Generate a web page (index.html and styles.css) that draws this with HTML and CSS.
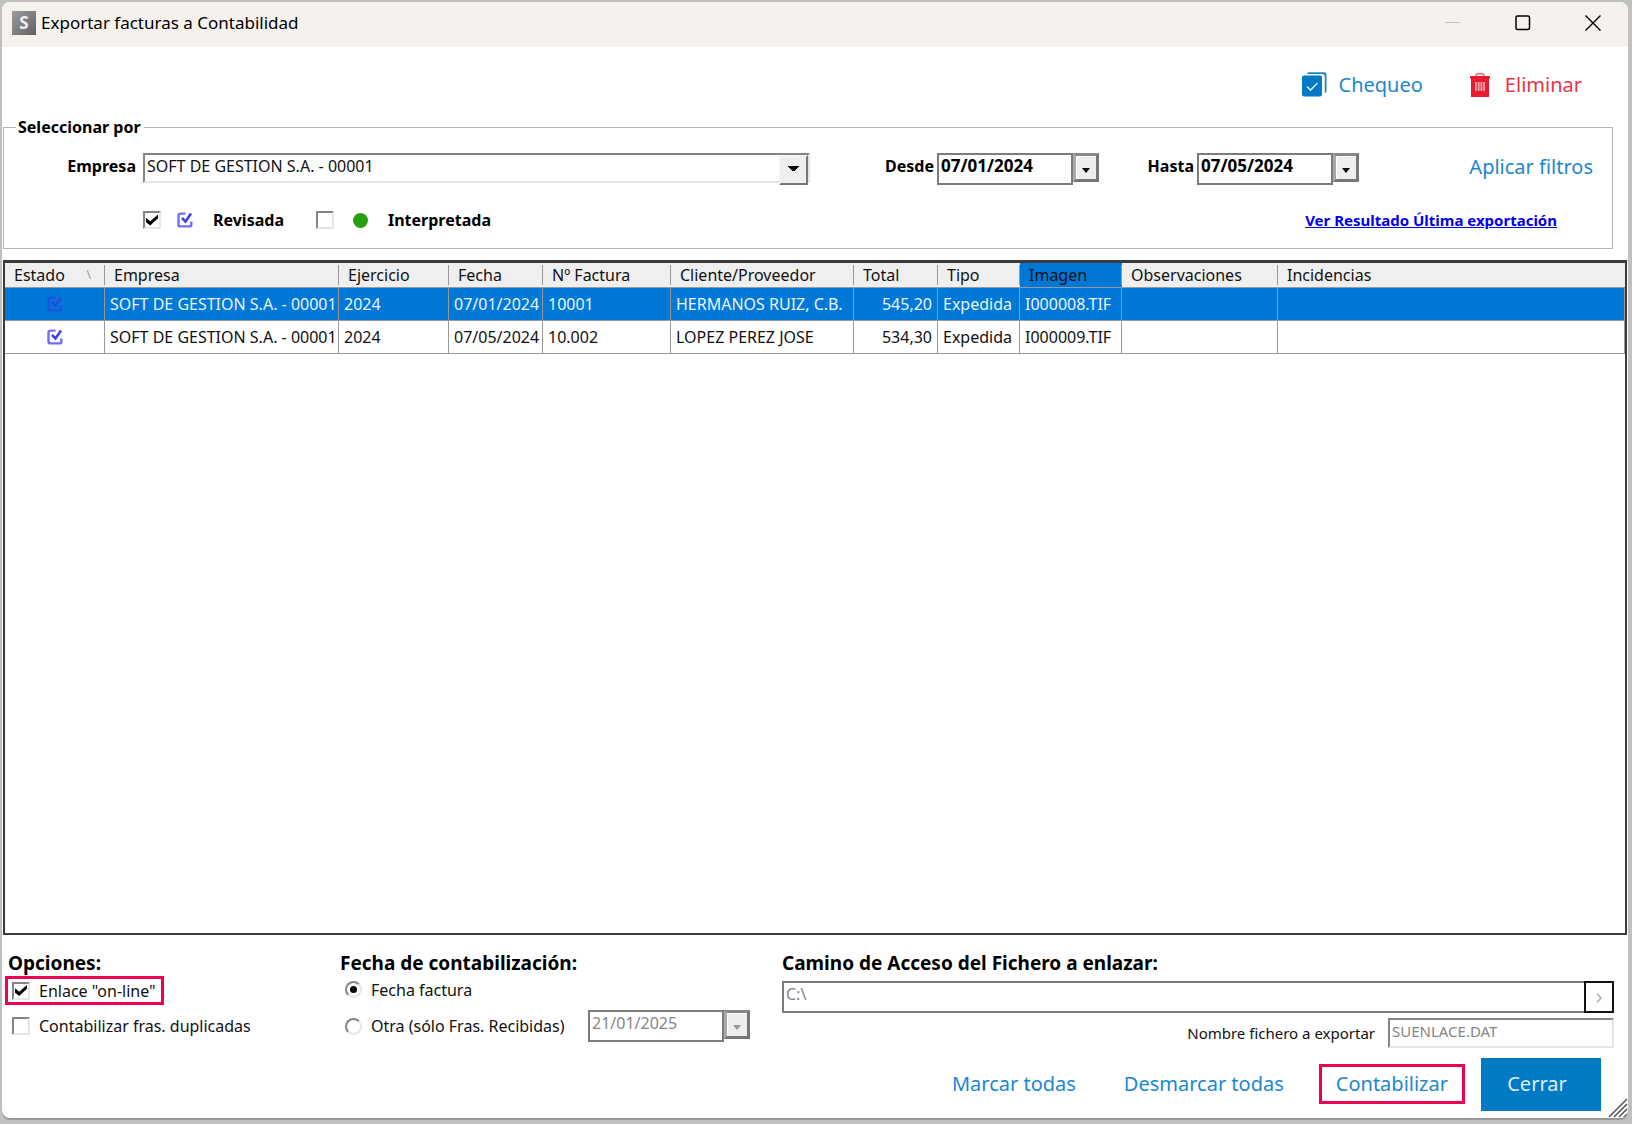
FILE: index.html
```html
<!DOCTYPE html>
<html lang="es">
<head>
<meta charset="utf-8">
<title>Exportar facturas a Contabilidad</title>
<link rel="stylesheet" href="styles.css">
</head>
<body>
<svg class="defs" aria-hidden="true">
  <symbol id="reviewed" viewBox="0 0 16 16">
    <path d="M8.500 1.600H3.500a2 2 0 0 0-2 2v8.800a2 2 0 0 0 2 2h8.800a2 2 0 0 0 2-2V9.500" fill="none" stroke="currentColor" stroke-width="2.400" opacity=".75"/>
    <path d="M5 6l3.500 3.500L14 1.500" fill="none" stroke="currentColor" stroke-width="2.600"/>
  </symbol>
</svg>
<div class="window">
  <header class="titlebar">
    <span class="app-icon" aria-hidden="true">S</span>
    <h1 class="title">Exportar facturas a Contabilidad</h1>
    <div class="window-controls">
      <button type="button" class="control" aria-label="Minimizar" disabled><svg width="16" height="16" viewBox="0 0 16 16"><path d="M0 7.500h15" stroke="#c4c0bc" stroke-width="1"/></svg></button>
      <button type="button" class="control" aria-label="Maximizar"><svg width="16" height="16" viewBox="0 0 16 16"><rect x="1" y="1" width="13.500" height="13.500" rx="1.500" fill="none" stroke="#000" stroke-width="1.500"/></svg></button>
      <button type="button" class="control" aria-label="Cerrar ventana"><svg width="16" height="16" viewBox="0 0 16 16"><path d="M.5.500l15 15M15.500.500l-15 15" stroke="#000" stroke-width="1.400"/></svg></button>
    </div>
  </header>

  <div class="toolbar">
    <button type="button" class="action">
      <svg width="25" height="25" viewBox="0 0 25 25"><path d="M5 2a2 2 0 0 1 2-1.700h15.500a2 2 0 0 1 2 2V19a2 2 0 0 1-1.800 2V4a2 2 0 0 0-2-2z" fill="#1c84c9"/><rect y="3.500" width="20" height="21" rx="2" fill="#007ac5"/><path d="M5 14.500l3.500 3.500 7-7" fill="none" stroke="#d5ebf8" stroke-width="1.600"/></svg>
      Chequeo
    </button>
    <button type="button" class="action danger">
      <svg width="20" height="24" viewBox="0 0 20 24"><path d="M6 4V2.500A1.800 1.800 0 0 1 7.800.800h4.400A1.800 1.800 0 0 1 14 2.500V4" fill="none" stroke="#ee6571" stroke-width="1.500"/><path d="M0 3h20v2.500h-1V24H1V5.500H0z" fill="#e81c30"/><path d="M6 9v9M8.700 9v9M11.400 9v9M14 9v9" stroke="#f6a0a8" stroke-width="1.800"/></svg>
      Eliminar
    </button>
  </div>

  <fieldset class="filters">
    <legend>Seleccionar por</legend>
    <div class="filter-row">
      <label class="name" for="empresa">Empresa</label>
      <div class="combo">
        <select id="empresa"><option>SOFT DE GESTION S.A. - 00001</option></select>
      </div>
      <label class="name" for="desde">Desde</label>
      <div class="date">
        <input id="desde" type="text" value="07/01/2024"><button type="button" class="drop" aria-label="Abrir calendario desde"></button>
      </div>
      <label class="name" for="hasta">Hasta</label>
      <div class="date">
        <input id="hasta" type="text" value="07/05/2024"><button type="button" class="drop" aria-label="Abrir calendario hasta"></button>
      </div>
      <button type="button" class="action apply">Aplicar filtros</button>
    </div>
    <div class="state-row">
      <label class="state"><input type="checkbox" class="check" checked><svg class="mark" width="16" height="16"><use href="#reviewed"/></svg>Revisada</label>
      <label class="state"><input type="checkbox" class="check"><span class="dot"></span>Interpretada</label>
      <a class="last-export" href="#resultado">Ver Resultado Última exportación</a>
    </div>
  </fieldset>

  <div class="grid-panel">
    <table class="invoices">
      <colgroup><col class="c-state"><col class="c-company"><col class="c-year"><col class="c-date"><col class="c-number"><col class="c-client"><col class="c-total"><col class="c-type"><col class="c-image"><col class="c-notes"><col></colgroup>
      <thead>
        <tr>
          <th><span class="sorted">Estado<i>\</i></span></th><th>Empresa</th><th>Ejercicio</th><th>Fecha</th><th>Nº Factura</th><th>Cliente/Proveedor</th><th>Total</th><th>Tipo</th><th class="current">Imagen</th><th>Observaciones</th><th>Incidencias</th>
        </tr>
      </thead>
      <tbody>
        <tr class="selected">
          <td class="icon"><svg class="mark" width="16" height="16" role="img" aria-label="Revisada"><use href="#reviewed"/></svg></td><td>SOFT DE GESTION S.A. - 00001</td><td>2024</td><td>07/01/2024</td><td>10001</td><td>HERMANOS RUIZ, C.B.</td><td class="amount">545,20</td><td>Expedida</td><td>I000008.TIF</td><td></td><td></td>
        </tr>
        <tr>
          <td class="icon"><svg class="mark" width="16" height="16" role="img" aria-label="Revisada"><use href="#reviewed"/></svg></td><td>SOFT DE GESTION S.A. - 00001</td><td>2024</td><td>07/05/2024</td><td>10.002</td><td>LOPEZ PEREZ JOSE</td><td class="amount">534,30</td><td>Expedida</td><td>I000009.TIF</td><td></td><td></td>
        </tr>
      </tbody>
    </table>
  </div>

  <div class="options">
    <section class="option-group">
      <h2>Opciones:</h2>
      <label class="choice marked"><input type="checkbox" class="check" checked>Enlace "on-line"</label>
      <label class="choice"><input type="checkbox" class="check">Contabilizar fras. duplicadas</label>
    </section>
    <section class="posting-date">
      <h2>Fecha de contabilización:</h2>
      <label class="choice"><input type="radio" class="radio" name="fecha" checked>Fecha factura</label>
      <div class="other-date">
        <label class="choice"><input type="radio" class="radio" name="fecha">Otra (sólo Fras. Recibidas)</label>
        <div class="date">
          <input type="text" value="21/01/2025" aria-label="Otra fecha" disabled><button type="button" class="drop" aria-label="Abrir calendario" disabled></button>
        </div>
      </div>
    </section>
    <section class="file">
      <h2><label for="ruta">Camino de Acceso del Fichero a enlazar:</label></h2>
      <div class="path">
        <input id="ruta" type="text" value="C:\" disabled><button type="button" aria-label="Examinar" disabled><svg width="6" height="10" viewBox="0 0 6 10"><path d="M1 .700L5 5 1 9.300" fill="none" stroke="#aaa" stroke-width="1.500"/></svg></button>
      </div>
      <div class="file-name">
        <label for="fichero">Nombre fichero a exportar</label>
        <input id="fichero" type="text" value="SUENLACE.DAT" disabled>
      </div>
    </section>
  </div>

  <footer class="actions">
    <button type="button" class="action">Marcar todas</button>
    <button type="button" class="action">Desmarcar todas</button>
    <button type="button" class="action outlined">Contabilizar</button>
    <button type="button" class="action primary">Cerrar</button>
  </footer>
  <svg class="grip" width="20" height="20" viewBox="0 0 20 20" aria-hidden="true"><path d="M1 19L19 1M6 19L19 6M11 19l8-8M16 19l3-3" stroke="#555" stroke-width="1.600"/></svg>
</div>
</body>
</html>
```
FILE: styles.css
```css
* {
  box-sizing: border-box;
}

body {
  margin: 0;
  background: #c0c0c0;
  color: #111;
  font: 16px/20px "Noto Sans", "Open Sans", sans-serif;
}

button,
input,
select {
  margin: 0;
  padding: 0;
  border: 0;
  border-radius: 0;
  background: none;
  color: inherit;
  font: inherit;
}

h1,
h2 {
  margin: 0;
}

.defs {
  position: absolute;
  width: 0;
  height: 0;
}

.window {
  position: relative;
  display: flex;
  flex-direction: column;
  min-height: calc(100vh - 8px);
  margin: 2px 4px 6px 2px;
  overflow: hidden;
  border-radius: 8px;
  background: #fff;
  box-shadow: 0 2px 0 #9a9a9a;
}

/* Title bar */
.titlebar {
  display: flex;
  align-items: center;
  height: 45px;
  padding: 0 27px 3px 10px;
  background: #f5f2ee;
}

.app-icon {
  width: 24px;
  height: 24px;
  background: linear-gradient(135deg, #9c9b9d, #626065);
  color: #eee;
  font-size: 17px;
  font-weight: 700;
  line-height: 23px;
  text-align: center;
}

.title {
  margin-left: 5px;
  color: #000;
  font-size: 17px;
  font-weight: 400;
}

.window-controls {
  display: flex;
  gap: 54px;
  margin-left: auto;
}

.control {
  display: flex;
  width: 16px;
  height: 16px;
}

/* Text buttons */
.action {
  display: flex;
  align-items: center;
  gap: 12px;
  color: #1b87cf;
  font-size: 20px;
  line-height: 24px;
}

.danger {
  gap: 15px;
  color: #ea3346;
}

.toolbar {
  display: flex;
  justify-content: flex-end;
  align-items: center;
  gap: 47px;
  height: 72px;
  padding: 3px 46px 0 0;
}

/* Filters */
.filters {
  min-width: 0;
  margin: 0 15px 0 1px;
  padding: 18px 0 16px;
  border: 1px solid #b4b4b4;
}

.filters legend {
  margin-left: 12px;
  padding: 0 3px 0 2px;
  color: #000;
  font-weight: 700;
  line-height: 16px;
}

.filter-row {
  display: grid;
  grid-template-columns: 132px minmax(200px, 1fr) 121px 162px 92px 162px 250px;
  column-gap: 3px;
  align-items: start;
}

.name {
  padding-top: 3px;
  color: #000;
  font-weight: 700;
  text-align: right;
}

.combo {
  position: relative;
  height: 30px;
  margin-left: 4px;
  border: 2px solid;
  border-color: #858585 #e6e6e6 #e6e6e6 #858585;
}

.combo select {
  width: 100%;
  height: 22px;
  padding-left: 2px;
  appearance: none;
}

.combo::after {
  content: "";
  position: absolute;
  top: 0;
  right: 0;
  width: 25px;
  height: 26px;
  border: 2px solid;
  border-color: #f4f4f4 #777 #777 #f4f4f4;
  background: linear-gradient(#000, #000) center 9px / 11px 1px no-repeat, linear-gradient(#000, #000) center 10px / 9px 1px no-repeat, linear-gradient(#000, #000) center 11px / 7px 1px no-repeat, linear-gradient(#000, #000) center 12px / 5px 1px no-repeat, linear-gradient(#000, #000) center 13px / 3px 1px no-repeat, #eee;
  pointer-events: none;
}

.date {
  display: flex;
  align-items: flex-start;
}

.date input {
  width: 136px;
  height: 32px;
  padding: 0 0 7px 2px;
  border: 2px solid #7c7c7c;
  color: #000;
  font-size: 17px;
  font-weight: 700;
}

.drop {
  display: grid;
  place-items: center;
  width: 26px;
  height: 29px;
  border: 3px solid;
  border-color: #888 #777 #777 #aaa;
  background: #eee;
  box-shadow: inset 1px 1px #fff;
}

.drop::before {
  content: "";
  margin-top: 5px;
  border: 4px solid transparent;
  border-top: 5px solid #000;
  border-bottom: 0;
}

.date input:disabled {
  color: #858585;
  font-size: 16px;
  font-weight: 400;
}

input:disabled {
  color: #858585;
}

.drop:disabled::before {
  border-top-color: #999;
}

.apply {
  justify-self: end;
  margin-right: 19px;
  padding-top: 2px;
}

.state-row {
  display: flex;
  align-items: center;
  height: 24px;
  margin-top: 23px;
  padding: 0 55px 0 139px;
}

.state {
  display: flex;
  align-items: center;
  margin-right: 32px;
  color: #000;
  font-weight: 700;
}

.state .mark,
.state .dot {
  margin: 0 20px 0 16px;
}

.mark {
  display: block;
  color: #3f3ff0;
}

.state .dot {
  width: 15px;
  height: 15px;
  margin-left: 19px;
  border-radius: 50%;
  background: #27a010;
}

.last-export {
  margin-left: auto;
  color: #00e;
  font-size: 15px;
  font-weight: 700;
}

.check {
  display: grid;
  place-items: center;
  width: 18px;
  height: 18px;
  border: 2px solid;
  border-color: #858585 #e6e6e6 #e6e6e6 #858585;
  appearance: none;
}

.check:checked::before {
  content: "";
  width: 12px;
  height: 11px;
  background: #000;
  clip-path: polygon(0 30%, 35% 62%, 100% 0, 100% 34%, 35% 100%, 0 70%);
}

/* Invoice grid */
.grid-panel {
  flex: 1;
  margin: 11px 1px 0;
  border: 2px solid #3a3a3a;
  border-width: 3px 2px 2px;
}

.invoices {
  width: 100%;
  border-spacing: 0;
  table-layout: fixed;
}

.c-state { width: 100px; }
.c-company { width: 234px; }
.c-year { width: 110px; }
.c-date { width: 94px; }
.c-number { width: 128px; }
.c-client { width: 183px; }
.c-total { width: 84px; }
.c-type { width: 82px; }
.c-image { width: 102px; }
.c-notes { width: 156px; }

.invoices th,
.invoices td {
  overflow: hidden;
  padding: 0 5px;
  border-right: 1px solid #999;
  border-bottom: 1px solid #999;
  text-align: left;
  white-space: nowrap;
}

.invoices th {
  height: 25px;
  padding: 0 9px;
  border-right: 0;
  background: linear-gradient(#999, #999) right center / 1px 20px no-repeat #efefef;
  font-weight: 400;
}

.invoices th:last-child {
  background: #efefef;
}

.invoices .current {
  background-color: #0078d7;
}

.sorted {
  display: flex;
  justify-content: space-between;
}

.sorted i {
  padding-right: 5px;
  color: #999;
  font-size: 12px;
  font-style: normal;
}

.invoices td {
  height: 33px;
}

.invoices .icon .mark {
  margin: 0 auto;
}

.invoices .amount {
  text-align: right;
}

.selected {
  background: #0078d7;
  color: #eaf4fc;
}

.selected .mark {
  color: #2b45e8;
}

/* Export options */
.options {
  display: grid;
  grid-template-columns: 335px 442px minmax(0, 1fr);
  padding: 16px 14px 0 3px;
}

.options h2 {
  height: 25px;
  color: #000;
  font-size: 19px;
  line-height: 24px;
}

.option-group h2 {
  padding-left: 3px;
}

.choice {
  display: flex;
  align-items: center;
  gap: 9px;
}

.option-group .choice {
  width: max-content;
  height: 29px;
  padding-left: 7px;
}

.option-group .choice + .choice {
  margin-top: 6px;
}

.option-group .marked {
  padding: 0 5px 0 4px;
  border: 3px solid #f0004f;
}

.posting-date > .choice {
  height: 27px;
}

.posting-date .choice {
  padding-left: 5px;
}

.radio {
  display: grid;
  place-items: center;
  width: 17px;
  height: 17px;
  border: 2px solid;
  border-color: #858585 #e6e6e6 #e6e6e6 #858585;
  border-radius: 50%;
  appearance: none;
}

.radio:checked::before {
  content: "";
  width: 7px;
  height: 7px;
  border-radius: 50%;
  background: #000;
}

.other-date {
  display: flex;
  align-items: center;
  justify-content: space-between;
  height: 32px;
  margin-top: 7px;
  padding-right: 32px;
}

.path {
  display: flex;
  height: 32px;
  margin-top: 5px;
}

.path input {
  flex: 1;
  min-width: 0;
  padding: 0 0 6px 2px;
  border: 2px solid #7c7c7c;
  border-right: 0;
}

.path button {
  width: 30px;
  border: 2px solid #111;
}

.file-name {
  display: flex;
  justify-content: flex-end;
  align-items: center;
  gap: 13px;
  margin-top: 5px;
  font-size: 15px;
}

.file-name input {
  width: 226px;
  height: 30px;
  padding: 0 0 4px 2px;
  border: 2px solid;
  border-color: #858585 #e6e6e6 #e6e6e6 #858585;
}

/* Bottom buttons */
.actions {
  display: flex;
  justify-content: flex-end;
  align-items: center;
  padding: 10px 27px 7px;
}

.actions .action {
  margin: 0 0 2px 48px;
}

.actions .outlined {
  height: 40px;
  margin-left: 35px;
  padding: 0 14px;
  border: 3px solid #f0004f;
}

.actions .primary {
  justify-content: center;
  width: 120px;
  height: 53px;
  margin: 0 0 0 16px;
  padding: 0 8px 2px 0;
  background: #007ac5;
  color: #dceefa;
}

.grip {
  position: absolute;
  right: 0;
  bottom: 0;
}
```
